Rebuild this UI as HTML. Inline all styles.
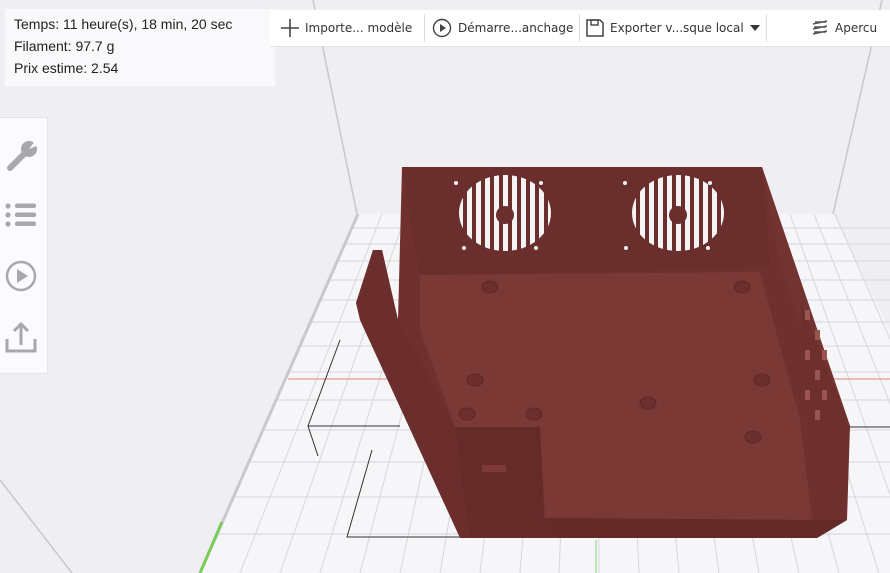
<!DOCTYPE html><html><head><meta charset="utf-8"><style>
body{margin:0;width:890px;height:573px;overflow:hidden;background:#efeff3;font-family:"Liberation Sans","DejaVu Sans",sans-serif;position:relative}
.info{position:absolute;left:5px;top:9px;width:270px;height:77px;background:#f9f9fb;font-size:14px;color:#222;line-height:22px;padding:4px 0 0 9px;box-sizing:border-box}
.tb{position:absolute;left:270px;top:10px;width:620px;height:36px;background:#fff;border-bottom:1px solid #e2e2e6;font-family:"DejaVu Sans",sans-serif;font-size:12px;color:#333}
.tb span{position:absolute;top:11px;white-space:nowrap}
.sep{position:absolute;top:4px;width:1px;height:28px;background:#ddd}
.side{position:absolute;left:0;top:117px;width:47px;height:255px;background:#fbfbfd;border:1px solid #e4e4e8;border-left:none}
</style></head><body>
<svg width="890" height="573" style="position:absolute;left:0;top:0">
<defs>
<clipPath id="f1"><ellipse cx="505" cy="213" rx="46" ry="38"/></clipPath>
<clipPath id="f2"><ellipse cx="678" cy="213" rx="46" ry="38"/></clipPath>
</defs>
<line x1="313" y1="0" x2="357" y2="214" stroke="#c8c8cc" stroke-width="1.5"/>
<line x1="882" y1="0" x2="833" y2="214" stroke="#c8c8cc" stroke-width="1.5"/>
<line x1="0" y1="480" x2="72" y2="573" stroke="#c8c8cc" stroke-width="1.5"/>
<polygon points="358,214 833,214 890,330 890,573 200,573" fill="#f6f6f8"/>
<g stroke="#d6d6db" stroke-width="1">
<line x1="358" y1="214" x2="200" y2="573"/><line x1="382" y1="214" x2="240" y2="573"/><line x1="406" y1="214" x2="280" y2="573"/><line x1="430" y1="214" x2="320" y2="573"/><line x1="454" y1="214" x2="360" y2="573"/><line x1="478" y1="214" x2="400" y2="573"/><line x1="502" y1="214" x2="440" y2="573"/><line x1="526" y1="214" x2="480" y2="573"/><line x1="550" y1="214" x2="520" y2="573"/><line x1="574" y1="214" x2="559" y2="573"/><line x1="598" y1="214" x2="599" y2="573"/><line x1="622" y1="214" x2="639" y2="573"/><line x1="646" y1="214" x2="679" y2="573"/><line x1="670" y1="214" x2="719" y2="573"/><line x1="694" y1="214" x2="759" y2="573"/><line x1="718" y1="214" x2="799" y2="573"/><line x1="742" y1="214" x2="839" y2="573"/><line x1="766" y1="214" x2="879" y2="573"/><line x1="790" y1="214" x2="918" y2="573"/><line x1="814" y1="214" x2="958" y2="573"/><line x1="835" y1="214" x2="993" y2="573"/>
</g>
<g stroke="#d6d6db" stroke-width="1">
<line x1="350" y1="228" x2="890" y2="228"/><line x1="343" y1="244" x2="890" y2="244"/><line x1="336" y1="261" x2="890" y2="261"/><line x1="327" y1="280" x2="890" y2="280"/><line x1="318" y1="300" x2="890" y2="300"/><line x1="308" y1="322" x2="890" y2="322"/><line x1="298" y1="346" x2="890" y2="346"/><line x1="286" y1="372" x2="890" y2="372"/><line x1="274" y1="400" x2="890" y2="400"/><line x1="261" y1="430" x2="890" y2="430"/><line x1="247" y1="462" x2="890" y2="462"/><line x1="231" y1="497" x2="890" y2="497"/><line x1="215" y1="534" x2="890" y2="534"/>
</g>
<line x1="358" y1="214" x2="200" y2="573" stroke="#c8c8ce" stroke-width="3"/>
<line x1="288" y1="379" x2="890" y2="379" stroke="#e08080" stroke-width="1"/>
<line x1="222" y1="522" x2="200" y2="573" stroke="#7ccc5a" stroke-width="3"/>
<line x1="596" y1="540" x2="596" y2="573" stroke="#8ccc7a" stroke-width="1"/>
<g stroke="#333" stroke-width="1" fill="none">
<polyline points="340,340 308,426 318,456"/><polyline points="372,450 347,537 490,537"/><line x1="308" y1="426" x2="400" y2="426"/><line x1="740" y1="427" x2="890" y2="427"/>
</g>
<!-- model -->
<polygon points="402,167 762,167 850,426 847,520 817,538 470,538 356,303 373,250 382,250 398,320" fill="#6f302e"/>
<polygon points="420,275 760,272 800,420 812,520 545,518 540,427 455,427 420,330" fill="#7b3936"/>
<polygon points="402,167 762,167 770,268 420,275" fill="#6a2e2c"/>
<polygon points="762,167 850,426 835,430 780,265" fill="#733431"/>
<polygon points="453,427 540,427 544,518 560,538 470,538" fill="#642b29"/>
<polygon points="356,303 373,250 382,250 398,320 455,427 470,538 460,538 360,320" fill="#6b2e2c"/>
<polygon points="545,518 812,520 847,520 817,538 560,538" fill="#632a28"/>
<polygon points="800,300 850,426 842,520 815,520" fill="#6e302d"/>
<!-- fans -->
<g clip-path="url(#f1)" fill="#f4f4f6">
<rect x="458" y="170" width="5" height="90"/><rect x="467" y="170" width="5" height="90"/><rect x="476" y="170" width="5" height="90"/><rect x="485" y="170" width="5" height="90"/><rect x="494" y="170" width="5" height="90"/><rect x="503" y="170" width="5" height="90"/><rect x="512" y="170" width="5" height="90"/><rect x="521" y="170" width="5" height="90"/><rect x="530" y="170" width="5" height="90"/><rect x="539" y="170" width="5" height="90"/><rect x="548" y="170" width="5" height="90"/>
</g>
<g clip-path="url(#f2)" fill="#f4f4f6">
<rect x="631" y="170" width="5" height="90"/><rect x="640" y="170" width="5" height="90"/><rect x="649" y="170" width="5" height="90"/><rect x="658" y="170" width="5" height="90"/><rect x="667" y="170" width="5" height="90"/><rect x="676" y="170" width="5" height="90"/><rect x="685" y="170" width="5" height="90"/><rect x="694" y="170" width="5" height="90"/><rect x="703" y="170" width="5" height="90"/><rect x="712" y="170" width="5" height="90"/><rect x="721" y="170" width="5" height="90"/>
</g>
<g fill="#6a2e2c"><circle cx="505" cy="215" r="9"/><circle cx="678" cy="215" r="9"/></g>
<g fill="#f4f4f6">
<circle cx="456" cy="183" r="2"/><circle cx="541" cy="183" r="2"/><circle cx="464" cy="248" r="2"/><circle cx="536" cy="248" r="2"/><circle cx="625" cy="183" r="2"/><circle cx="710" cy="183" r="2"/><circle cx="626" cy="248" r="2"/><circle cx="708" cy="248" r="2"/>
</g>
<g fill="#6c2f2d" stroke="#5e2826" stroke-width="1">
<ellipse cx="490" cy="287" rx="8" ry="6"/><ellipse cx="742" cy="287" rx="8" ry="6"/><ellipse cx="475" cy="380" rx="8" ry="6"/><ellipse cx="762" cy="380" rx="8" ry="6"/><ellipse cx="648" cy="403" rx="8" ry="6"/><ellipse cx="534" cy="414" rx="8" ry="6"/><ellipse cx="467" cy="414" rx="8" ry="6"/><ellipse cx="753" cy="437" rx="8" ry="6"/>
</g>
<rect x="482" y="465" width="24" height="7" fill="#7d3a37"/>
<g fill="#9a5550"><rect x="805" y="310" width="5" height="10"/><rect x="815" y="330" width="5" height="10"/><rect x="805" y="350" width="5" height="10"/><rect x="815" y="370" width="5" height="10"/><rect x="805" y="390" width="5" height="10"/><rect x="815" y="410" width="5" height="10"/><rect x="822" y="350" width="5" height="10"/><rect x="822" y="390" width="5" height="10"/></g>
</svg>
<div class="info">Temps: 11 heure(s), 18 min, 20 sec<br>Filament: 97.7 g<br>Prix estime: 2.54</div>
<div class="tb">
<svg style="position:absolute;left:10px;top:8px" width="20" height="20"><path d="M10 1V19M1 10H19" stroke="#444" stroke-width="1.6"/></svg>
<span style="left:35px">Importe... modèle</span>
<div class="sep" style="left:154px"></div>
<svg style="position:absolute;left:162px;top:8px" width="20" height="20"><circle cx="10" cy="10" r="8.5" fill="none" stroke="#444" stroke-width="1.4"/><path d="M8 6L14 10L8 14Z" fill="#444"/></svg>
<span style="left:188px">Démarre...anchage</span>
<div class="sep" style="left:309px"></div>
<svg style="position:absolute;left:315px;top:8px" width="20" height="20"><path d="M2 2H15L18 5V18H2Z" fill="none" stroke="#444" stroke-width="1.5"/><rect x="6" y="2" width="7" height="5" fill="none" stroke="#444" stroke-width="1.4"/></svg>
<span style="left:340px">Exporter v...sque local</span>
<svg style="position:absolute;left:479px;top:14px" width="12" height="8"><path d="M1 1H11L6 7Z" fill="#333"/></svg>
<div class="sep" style="left:496px"></div>
<svg style="position:absolute;left:540px;top:8px" width="20" height="20"><path d="M3 6L17 3M3 11L17 8M3 16L17 13M5 4H16M4 9H16M4 14H16" stroke="#555" stroke-width="1.6" fill="none"/></svg>
<span style="left:565px">Apercu</span>
</div>
<div class="side">
<svg style="position:absolute;left:5px;top:20px" width="34" height="36"><line x1="5" y1="30" x2="20" y2="15" stroke="#a8a7ad" stroke-width="6" stroke-linecap="round"/><circle cx="24" cy="11" r="8" fill="#a8a7ad"/><path d="M24 11L30 3L34 7Z" fill="#fbfbfd"/></svg>
<svg style="position:absolute;left:5px;top:85px" width="34" height="26"><g fill="#a8a7ad"><circle cx="3" cy="3" r="2.6"/><circle cx="3" cy="12" r="2.6"/><circle cx="3" cy="21" r="2.6"/><rect x="10" y="0.5" width="21" height="4.5" rx="2"/><rect x="10" y="9.5" width="21" height="4.5" rx="2"/><rect x="10" y="18.5" width="21" height="4.5" rx="2"/></g></svg>
<svg style="position:absolute;left:5px;top:142px" width="32" height="32"><circle cx="16" cy="16" r="14" fill="none" stroke="#a8a7ad" stroke-width="2.5"/><path d="M12 9L23 16L12 23Z" fill="#a8a7ad"/></svg>
<svg style="position:absolute;left:5px;top:203px" width="32" height="32"><path d="M2 18V30H30V18M16 24V3M9 10L16 3L23 10" fill="none" stroke="#a8a7ad" stroke-width="3"/></svg>
</div>
</body></html>
